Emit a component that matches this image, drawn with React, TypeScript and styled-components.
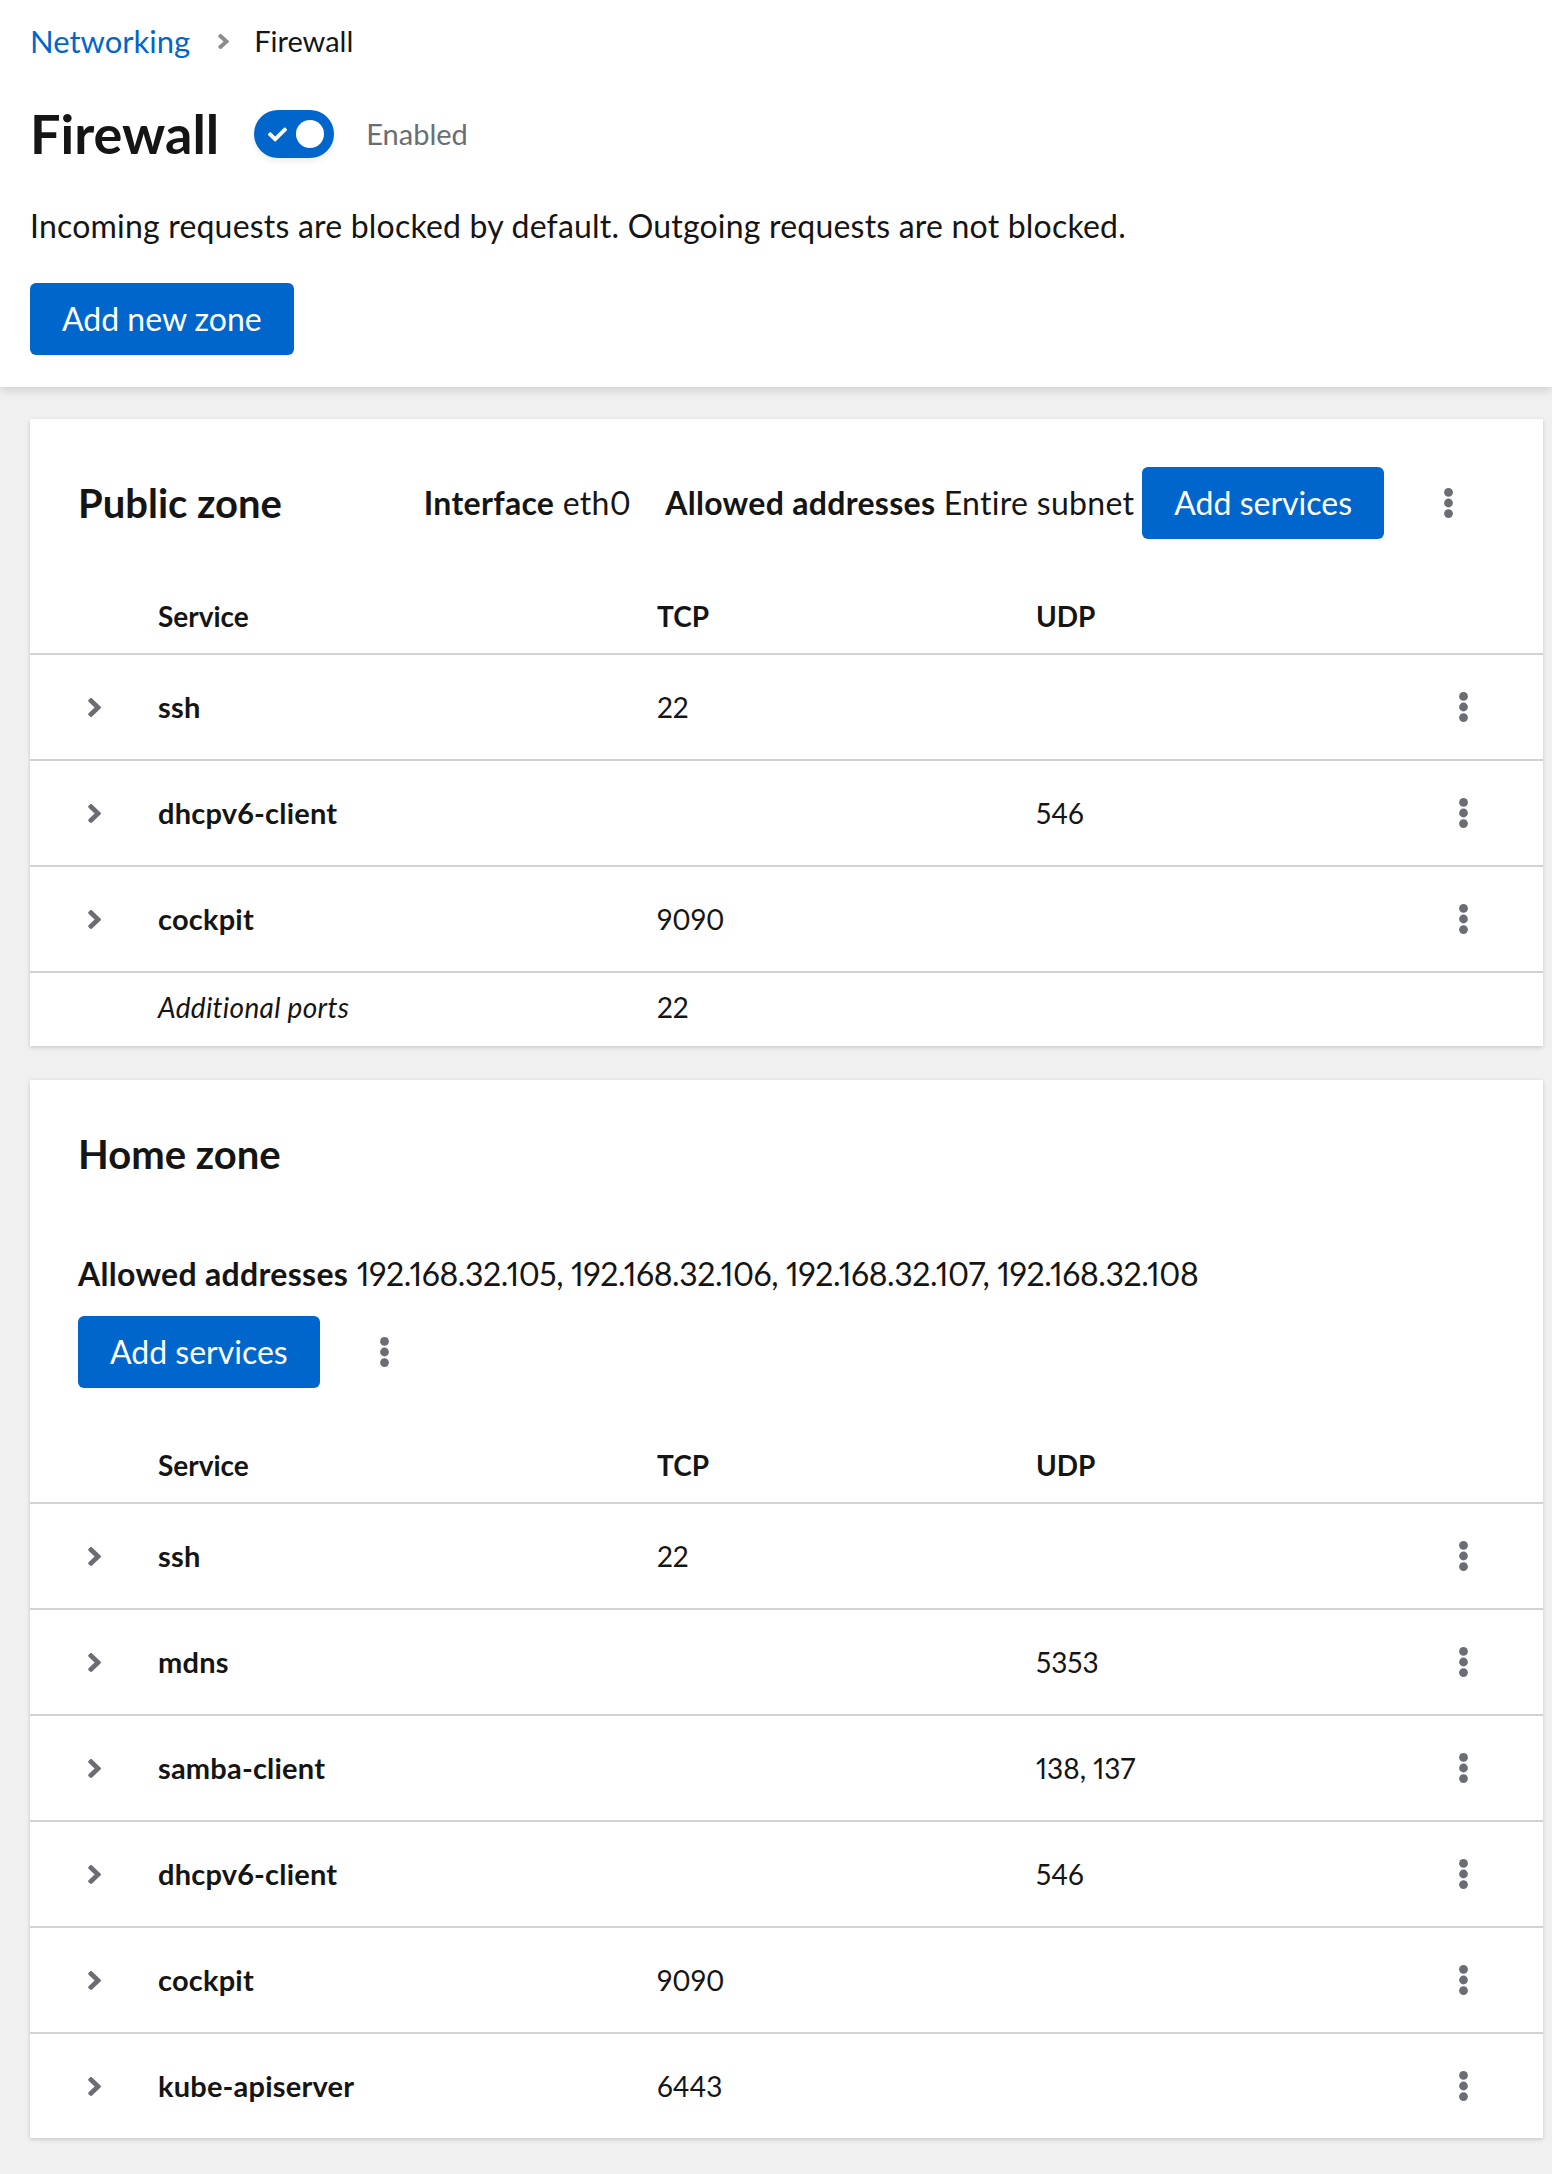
import React from "react";
import styled, { createGlobalStyle } from "styled-components";

const GlobalStyle = createGlobalStyle`
  html, body {
    margin: 0;
    padding: 0;
    background: #f0f0f0;
  }
  body {
    font-family: Lato, "Open Sans", sans-serif;
    color: #151515;
    font-variant-numeric: proportional-nums;
    -webkit-font-smoothing: antialiased;
  }
  *, *::before, *::after { box-sizing: border-box; }
`;

/* ---------- icons ---------- */

const AngleRight = ({ w, h, color }: { w: number; h: number; color: string }) => (
  <svg width={w} height={h} viewBox="22 96 210 320" preserveAspectRatio="none" aria-hidden="true">
    <path
      fill={color}
      d="M224.3 273l-136 136c-9.4 9.4-24.6 9.4-33.9 0l-22.6-22.6c-9.4-9.4-9.4-24.6 0-33.9l96.4-96.4-96.4-96.4c-9.4-9.4-9.4-24.6 0-33.9L54.3 103c9.4-9.4 24.6-9.4 33.9 0l136 136c9.5 9.4 9.5 24.6.1 34z"
    />
  </svg>
);

const Kebab = () => (
  <svg width="9" height="30" viewBox="0 0 8.8 30" aria-hidden="true">
    <circle cx="4.4" cy="4.4" r="4.4" fill="#6a6e73" />
    <circle cx="4.4" cy="15" r="4.4" fill="#6a6e73" />
    <circle cx="4.4" cy="25.6" r="4.4" fill="#6a6e73" />
  </svg>
);

const CheckIcon = () => (
  <svg width="19" height="15" viewBox="0 64 512 384" aria-hidden="true">
    <path
      fill="#fff"
      d="M173.898 439.404l-166.4-166.4c-9.997-9.997-9.997-26.206 0-36.204l36.203-36.204c9.997-9.998 26.207-9.998 36.204 0L192 312.69 432.095 72.596c9.997-9.997 26.207-9.997 36.204 0l36.203 36.204c9.997 9.997 9.997 26.206 0 36.204l-294.4 294.401c-9.998 9.997-26.207 9.997-36.204-.001z"
    />
  </svg>
);

/* ---------- page header ---------- */

const PageHeader = styled.header`
  position: relative;
  z-index: 1;
  background: #fff;
  padding: 20px 30px 32px;
  box-shadow: 0 4px 8px rgba(3, 3, 3, 0.12);
`;

const Breadcrumb = styled.nav`
  display: flex;
  align-items: center;
  font-size: 31px;
  line-height: 42px;
`;

const CrumbLink = styled.a`
  color: #0066cc;
  text-decoration: none;
`;

const CrumbDivider = styled.span`
  display: inline-flex;
  align-items: center;
  margin: 0 25px 0 28px;
`;

const CrumbCurrent = styled.span`
  color: #151515;
  font-size: 29px;
`;

const TitleRow = styled.div`
  display: flex;
  align-items: center;
  height: 48px;
  margin-top: 48px;
`;

const PageTitle = styled.h1`
  margin: 0 35px 0 0;
  font-size: 54px;
  line-height: 56px;
  font-weight: 700;
`;

const SwitchTrack = styled.span`
  position: relative;
  display: inline-flex;
  align-items: center;
  width: 80px;
  height: 48px;
  padding-left: 14px;
  border-radius: 24px;
  background: #0066cc;
  box-shadow: 0 3px 6px rgba(3, 3, 3, 0.08);
`;

const SwitchKnob = styled.span`
  position: absolute;
  top: 10px;
  right: 10px;
  width: 28px;
  height: 28px;
  border-radius: 50%;
  background: #fff;
`;

const SwitchLabel = styled.span`
  margin-left: 32px;
  font-size: 29px;
  line-height: 42px;
  color: #6a6e73;
`;

const Description = styled.p`
  margin: 44px 0 0;
  font-size: 32px;
  line-height: 48px;
  letter-spacing: 0.2px;
  white-space: nowrap;
`;

const PrimaryButton = styled.button<{ $mt?: number }>`
  display: inline-block;
  margin-top: ${(p) => p.$mt ?? 0}px;
  padding: 12px 32px;
  border: 0;
  border-radius: 6px;
  background: #0066cc;
  color: #fff;
  font-family: inherit;
  font-size: 32px;
  line-height: 48px;
  white-space: nowrap;
  cursor: pointer;
`;

const KebabButton = styled.button<{ $ml?: number }>`
  display: inline-flex;
  align-items: center;
  justify-content: center;
  width: 64px;
  height: 72px;
  margin-left: ${(p) => p.$ml ?? 0}px;
  padding: 0;
  border: 0;
  background: none;
  cursor: pointer;
`;

/* ---------- zones ---------- */

const Main = styled.main`
  display: flex;
  flex-direction: column;
  gap: 34px;
  padding: 32px 9px 34px 30px;
`;

const Card = styled.section`
  background: #fff;
  box-shadow: 0 2px 4px rgba(3, 3, 3, 0.12), 0 0 4px rgba(3, 3, 3, 0.06);
`;

const InlineHeader = styled.div`
  display: flex;
  align-items: center;
  padding: 48px 63px 0 48px;
`;

const StackedHeader = styled.div`
  display: flex;
  flex-direction: column;
  align-items: flex-start;
  padding: 48px 48px 0;
`;

const ZoneTitle = styled.h2`
  margin: 0;
  font-size: 40px;
  line-height: 52px;
  font-weight: 700;
`;

const HeaderActions = styled.div`
  display: flex;
  align-items: center;
  margin-left: auto;
`;

const ActionsRow = styled.div`
  display: flex;
  align-items: center;
  margin-top: 18px;
`;

const Meta = styled.div<{ $mr?: number; $mt?: number }>`
  margin-right: ${(p) => p.$mr ?? 0}px;
  margin-top: ${(p) => p.$mt ?? 0}px;
  font-size: 32px;
  line-height: 48px;
  letter-spacing: 0.3px;
  white-space: nowrap;
  b {
    font-weight: 700;
  }
`;

const Addresses = styled.span`
  letter-spacing: -0.4px;
`;

const Row = styled.div<{ $variant?: "head" | "body" | "extra" }>`
  display: grid;
  grid-template-columns: 128px 499px 379px 1fr 112px;
  align-items: center;
  font-size: 28px;
  line-height: 42px;
  padding: ${(p) =>
    p.$variant === "head" ? "56px 0 16px" : p.$variant === "extra" ? "13px 0 18px" : "31px 0"};
  font-weight: ${(p) => (p.$variant === "head" ? 700 : 400)};
  border-bottom: 2px solid #d2d2d2;
  &:last-child {
    border-bottom: 0;
  }
`;

const ToggleCell = styled.span`
  display: flex;
  justify-content: center;
  align-items: center;
`;

const NameCell = styled.span<{ $italic?: boolean }>`
  font-weight: ${(p) => (p.$italic ? 400 : 700)};
  font-style: ${(p) => (p.$italic ? "italic" : "normal")};
  font-size: ${(p) => (p.$italic ? 28 : 29)}px;
  letter-spacing: ${(p) => (p.$italic ? 0.3 : 0.2)}px;
`;

const Cell = styled.span``;

const ActionCell = styled.span`
  display: flex;
  align-items: center;
  height: 42px;
`;

type Service = { name: string; tcp?: string; udp?: string };

const publicServices: Service[] = [
  { name: "ssh", tcp: "22" },
  { name: "dhcpv6-client", udp: "546" },
  { name: "cockpit", tcp: "9090" },
];

const homeServices: Service[] = [
  { name: "ssh", tcp: "22" },
  { name: "mdns", udp: "5353" },
  { name: "samba-client", udp: "138, 137" },
  { name: "dhcpv6-client", udp: "546" },
  { name: "cockpit", tcp: "9090" },
  { name: "kube-apiserver", tcp: "6443" },
];

const RowKebab = styled(KebabButton)`
  height: 42px;
`;

const ServiceTable = ({ services, extra }: { services: Service[]; extra?: string }) => (
  <div role="table">
    <Row $variant="head" role="row">
      <Cell />
      <Cell>Service</Cell>
      <Cell>TCP</Cell>
      <Cell>UDP</Cell>
      <Cell />
    </Row>
    {services.map((s) => (
      <Row key={s.name} role="row">
        <ToggleCell>
          <AngleRight w={13} h={19} color="#6a6e73" />
        </ToggleCell>
        <NameCell>{s.name}</NameCell>
        <Cell>{s.tcp ?? ""}</Cell>
        <Cell>{s.udp ?? ""}</Cell>
        <ActionCell>
          <RowKebab aria-label="Actions">
            <Kebab />
          </RowKebab>
        </ActionCell>
      </Row>
    ))}
    {extra && (
      <Row $variant="extra" role="row">
        <Cell />
        <NameCell $italic>Additional ports</NameCell>
        <Cell>{extra}</Cell>
        <Cell />
        <Cell />
      </Row>
    )}
  </div>
);

export default function App() {
  return (
    <>
      <GlobalStyle />
      <PageHeader>
        <Breadcrumb aria-label="Breadcrumb">
          <CrumbLink href="#">Networking</CrumbLink>
          <CrumbDivider>
            <AngleRight w={11} h={15} color="#8a8d90" />
          </CrumbDivider>
          <CrumbCurrent>Firewall</CrumbCurrent>
        </Breadcrumb>
        <TitleRow>
          <PageTitle>Firewall</PageTitle>
          <SwitchTrack role="switch" aria-checked="true">
            <CheckIcon />
            <SwitchKnob />
          </SwitchTrack>
          <SwitchLabel>Enabled</SwitchLabel>
        </TitleRow>
        <Description>
          Incoming requests are blocked by default. Outgoing requests are not blocked.
        </Description>
        <PrimaryButton $mt={33}>Add new zone</PrimaryButton>
      </PageHeader>

      <Main>
        <Card>
          <InlineHeader>
            <ZoneTitle>Public zone</ZoneTitle>
            <HeaderActions>
              <Meta $mr={34}>
                <b>Interface</b> eth0
              </Meta>
              <Meta $mr={8}>
                <b>Allowed addresses</b> Entire subnet
              </Meta>
              <PrimaryButton>Add services</PrimaryButton>
              <KebabButton $ml={32} aria-label="Zone actions">
                <Kebab />
              </KebabButton>
            </HeaderActions>
          </InlineHeader>
          <ServiceTable services={publicServices} extra="22" />
        </Card>

        <Card>
          <StackedHeader>
            <ZoneTitle>Home zone</ZoneTitle>
            <Meta $mt={70}>
              <b>Allowed addresses</b>{" "}
              <Addresses>192.168.32.105, 192.168.32.106, 192.168.32.107, 192.168.32.108</Addresses>
            </Meta>
            <ActionsRow>
              <PrimaryButton>Add services</PrimaryButton>
              <KebabButton $ml={33} aria-label="Zone actions">
                <Kebab />
              </KebabButton>
            </ActionsRow>
          </StackedHeader>
          <ServiceTable services={homeServices} />
        </Card>
      </Main>
    </>
  );
}
